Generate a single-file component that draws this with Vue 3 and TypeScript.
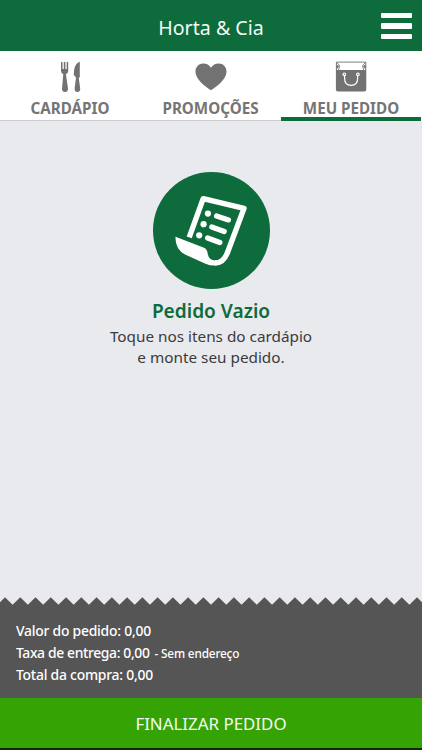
<script setup lang="ts">
import { ref } from 'vue'

type TabId = 'menu' | 'promo' | 'order'

interface Tab {
  id: TabId
  label: string
}

interface SummaryLine {
  id: string
  label: string
  value: string
  note?: string
}

const tabs: Tab[] = [
  { id: 'menu', label: 'CARDÁPIO' },
  { id: 'promo', label: 'PROMOÇÕES' },
  { id: 'order', label: 'MEU PEDIDO' },
]

const activeTab = ref<TabId>('order')

const summary: SummaryLine[] = [
  { id: 'order-value', label: 'Valor do pedido:', value: '0,00' },
  { id: 'delivery', label: 'Taxa de entrega:', value: '0,00', note: '- Sem endereço' },
  { id: 'total', label: 'Total da compra:', value: '0,00' },
]

// Torn-paper edge: evenly spaced teeth across the width of the footer
const pitch = 15.26
const firstPeak = 5
const teeth = Array.from({ length: 30 }, (_, i) => {
  const peak = firstPeak + (i - 1) * pitch
  return `${peak.toFixed(2)},0.3 ${(peak + pitch / 2).toFixed(2)},7.7`
}).join(' ')
const edgePoints = `-20,9 ${teeth} 450,9`
</script>

<template>
  <div class="app">
    <header class="topbar">
      <h1 class="title">Horta &amp; Cia</h1>
      <button class="burger" aria-label="Menu">
        <span /><span /><span />
      </button>
    </header>

    <nav class="tabs">
      <button
        v-for="tab in tabs"
        :key="tab.id"
        class="tab"
        :class="{ active: tab.id === activeTab }"
        @click="activeTab = tab.id"
      >
        <svg v-if="tab.id === 'menu'" class="icon" viewBox="0 0 32 32">
          <path
            d="M7 1.2q.8-.8 1.500 0V8h1.300V1.200q.8-.8 1.600 0V8h1.300V1.200q.8-.8 1.500 0V10q0 2.400-2.300 3.300L14 27.500Q14 31 11 31T8 27.500l1.300-14.200Q7 12.400 7 10z"
          />
          <path d="M25.200.8q.6 0 .6.700V16.500h-1.100L26.200 27.500Q26.200 31 23.400 31T20.600 27.500L22 16.500 19.800 14Q19.500 4 25.200.8z" />
        </svg>
        <svg v-else-if="tab.id === 'promo'" class="icon" viewBox="0 0 32 32">
          <path
            d="M16 29.200C14.500 28.300 .5 19.500 .5 10.400.5 5.800 4 2.500 8.200 2.500c3.400 0 6.100 1.500 7.800 4.300 1.700-2.800 4.400-4.300 7.800-4.300 4.200 0 7.700 3.300 7.700 7.900C31.500 19.500 17.500 28.300 16 29.200z"
          />
        </svg>
        <svg v-else class="icon" viewBox="0 0 32 32">
          <path d="M.9 9H31.300V28.500q0 2-2 2H2.900q-2 0-2-2z" />
          <path d="M1.400 9V1.100H30.800V9M1.400 1.100 4.600 4.600 3.600 9M30.800 1.100 27.600 4.600 28.600 9" class="fold" />
          <path d="M1.400 3.600 4.200 5 1.400 8.800zM30.800 3.600 28 5 30.800 8.800z" />
          <path d="M9.600 14v3.500q0 6.800 6.500 6.800t6.500-6.800V14" class="handle" />
          <circle cx="9.300" cy="13.300" r="1.300" class="handle" />
          <circle cx="22.900" cy="13.300" r="1.300" class="handle" />
        </svg>
        <span class="tab-label">{{ tab.label }}</span>
      </button>
    </nav>

    <main class="empty">
      <div class="badge">
        <svg viewBox="0 0 117 117">
          <path d="M36.200 65.400 50.200 26.700 91 36.400 74.500 80.500Q70.500 91 62 91" class="sheet" />
          <path
            d="M22.500 64.800 51 75.700Q54 77 54.600 81 55.500 88.500 62.500 88.500V93.500Q57.500 93.800 52.500 91.700L32 82.500Q22 77 22.500 64.800z"
            class="roll"
          />
          <g class="rows">
            <circle cx="54.900" cy="41.600" r="3.100" />
            <circle cx="50.600" cy="52.200" r="3.100" />
            <circle cx="46.200" cy="63.300" r="3.100" />
            <path d="M63.600 44 75.400 47.900M58.800 55 71.200 59.400M54.600 66 66.800 70.600" />
          </g>
        </svg>
      </div>
      <h2 class="heading">Pedido Vazio</h2>
      <p class="hint">Toque nos itens do cardápio<br />e monte seu pedido.</p>
    </main>

    <footer>
      <svg class="edge" viewBox="0 0 422 8"><polygon :points="edgePoints" /></svg>
      <div class="summary">
        <div v-for="line in summary" :key="line.id" class="line" :class="line.id">
          <span>{{ line.label }} {{ line.value }}</span>
          <small v-if="line.note">{{ line.note }}</small>
        </div>
      </div>
      <button class="finish">FINALIZAR PEDIDO</button>
    </footer>
  </div>
</template>

<style>
body {
  margin: 0;
  background: #e9eaee;
}
</style>

<style scoped>
.app {
  display: flex;
  flex-direction: column;
  width: 100%;
  height: 750px;
  overflow: hidden;
  background: #e9eaee;
  font-family: 'Noto Sans', 'Open Sans', sans-serif;
  white-space: nowrap;
}
button {
  border: 0;
  padding: 0;
  margin: 0;
  background: none;
  font: inherit;
}
.topbar {
  display: grid;
  grid-template-columns: 50px 1fr 50px;
  flex: none;
  height: 51px;
  background: #0e6b3b;
}
.title {
  grid-column: 2;
  margin: 0;
  padding-top: 4px;
  color: #f3faf5;
  font-size: 19.600px;
  font-weight: 400;
  line-height: 47px;
  text-align: center;
}
.burger {
  display: flex;
  flex-direction: column;
  gap: 5px;
  width: 31px;
  padding-top: 13px;
  margin-left: 9px;
}
.burger span {
  height: 5.300px;
  border-radius: 1px;
  background: #fff;
}
.tabs {
  display: grid;
  grid-template-columns: 140px 141px 140px;
  grid-template-rows: 70px;
  flex: none;
  height: 70px;
  background: #fff;
}
.tab {
  display: flex;
  flex-direction: column;
  align-items: center;
  box-sizing: border-box;
  padding-top: 10px;
  border-bottom: 1px solid #ceced2;
  color: #757575;
}
.tab.active {
  border-bottom: 4px solid #0e6b3b;
}
.icon {
  flex: none;
  width: 32px;
  height: 32px;
  fill: #727272;
}
.icon .fold {
  fill: none;
  stroke: #727272;
  stroke-width: 0.900;
}
.icon .handle {
  fill: none;
  stroke: #fff;
  stroke-width: 1.200;
}
.tab-label {
  margin-top: 6px;
  font-size: 15.200px;
  font-weight: 700;
  line-height: 18px;
}
.empty {
  display: flex;
  flex: 1;
  flex-direction: column;
  align-items: center;
  padding-top: 51px;
}
.badge {
  width: 117px;
  height: 117px;
  border-radius: 50%;
  background: #0e6b3b;
}
.badge svg {
  display: block;
}
.sheet {
  fill: none;
  stroke: #fff;
  stroke-width: 5.400;
  stroke-linejoin: round;
}
.roll {
  fill: #fff;
}
.rows {
  fill: #fff;
}
.rows path {
  stroke: #fff;
  stroke-width: 5.300;
  stroke-linecap: round;
}
.heading {
  margin: 8px 0 0;
  color: #0e6b3b;
  font-size: 19.100px;
  font-weight: 600;
  line-height: 28px;
}
.hint {
  margin: 1px 0 0;
  color: #3b3b3d;
  font-size: 15.300px;
  line-height: 20.500px;
  text-align: center;
}
footer {
  flex: none;
}
.edge {
  display: block;
  width: 422px;
  height: 8px;
  fill: #555;
}
.summary {
  height: 78px;
  padding: 15px 16px 0;
  background: #555;
  color: #fff;
  font-size: 13.900px;
  font-weight: 550;
  letter-spacing: -0.230px;
}
.line {
  height: 22px;
  line-height: 22px;
}
.delivery {
  letter-spacing: -0.360px;
}
.line small {
  margin-left: 5px;
  font-size: 11.800px;
  letter-spacing: -0.170px;
}
.finish {
  display: block;
  width: 100%;
  height: 52px;
  border-bottom: 2px solid #112408;
  background: #36a305;
  color: #f4fbf0;
  font-size: 16.900px;
}
</style>
